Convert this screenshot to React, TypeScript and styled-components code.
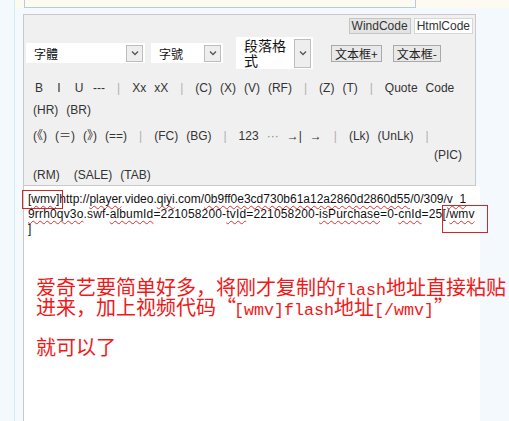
import { createGlobalStyle, styled } from 'styled-components'

const GlobalStyle = createGlobalStyle`
  html, body {
    margin: 0;
    padding: 0;
    background: #f4f9fd;
  }
  body {
    font-family: Arial, "Liberation Sans", "Noto Sans CJK SC", sans-serif;
  }
`

const Page = styled.div`
  display: flex;
  width: 509px;
  height: 421px;
  overflow: hidden;
`

const Gutter = styled.div`
  flex: none;
  width: 14px;
  background: #f4f9fd;
  border-right: 1px solid #d3ebf4;
`

const Content = styled.div`
  flex: 1;
  display: flex;
  flex-direction: column;
  min-width: 0;
`

const TopStrip = styled.div`
  flex: none;
  height: 8px;
  padding-left: 9px;
  background: #fdfbf1;
`

const TopBox = styled.div`
  width: 390px;
  height: 7px;
  border: 1px solid #b8cbd6;
  border-top: none;
`

const Editor = styled.div`
  flex: 1;
  display: flex;
  flex-direction: column;
  margin: 6px 0 0 8px;
`

const Toolbar = styled.div`
  width: 451px;
  height: 170px;
  background: #f0f0f0;
  border: 1px solid #c9c9c9;
  display: flex;
  flex-direction: column;
`

const TabBar = styled.div`
  height: 19px;
  box-sizing: border-box;
  padding: 3px 2px 0 0;
  display: flex;
  justify-content: flex-end;
  gap: 3px;
`

const Tab = styled.div<{ $active?: boolean }>`
  height: 16px;
  box-sizing: border-box;
  padding: 0 2px;
  border: 1px solid ${p => (p.$active ? '#d6d6d6' : '#c4c4c4')};
  background: ${p => (p.$active ? '#ffffff' : '#e4e4e4')};
  font-size: 12px;
  line-height: 14px;
  color: #333;
`

const ControlRow = styled.div`
  height: 32px;
  margin-top: 3px;
  padding-left: 2px;
  display: flex;
  align-items: center;
`

const Select = styled.div<{ $w: number; $h: number; $ml: number }>`
  width: ${p => p.$w}px;
  height: ${p => p.$h}px;
  margin-left: ${p => p.$ml}px;
  box-sizing: border-box;
  padding: 0 2px 0 8px;
  background: #fff;
  display: flex;
  align-items: center;
  justify-content: space-between;
`

const SelectLabel = styled.span<{ $size: number; $wrap?: number }>`
  font-family: "Noto Sans CJK SC", sans-serif;
  font-size: ${p => p.$size}px;
  line-height: 15px;
  color: #111;
  width: ${p => (p.$wrap ? `${p.$wrap}px` : 'auto')};
`

const Arrow = styled.span<{ $h: number }>`
  flex: none;
  width: 17px;
  height: ${p => p.$h}px;
  box-sizing: border-box;
  border: 1px solid #bdbdbd;
  background: #eeeeee;
  display: flex;
  align-items: center;
  justify-content: center;
`

const TextButton = styled.span<{ $ml: number }>`
  margin-left: ${p => p.$ml}px;
  height: 17px;
  box-sizing: border-box;
  padding: 0 3px;
  border: 1px solid #a9a9a9;
  background: #e9e9e9;
  font-family: "Noto Sans CJK SC", sans-serif;
  font-size: 12px;
  line-height: 15px;
  color: #222;
`

const Row = styled.div<{ $h: number; $mt?: number; $right?: boolean }>`
  height: ${p => p.$h}px;
  margin-top: ${p => p.$mt ?? 0}px;
  padding: 0 9px 0 5px;
  display: flex;
  align-items: center;
  justify-content: ${p => (p.$right ? 'flex-end' : 'flex-start')};
  white-space: nowrap;
`

const Btn = styled.span<{ $ml?: number; $muted?: boolean }>`
  margin: 0 4px 0 ${p => p.$ml ?? 4}px;
  min-width: 12px;
  text-align: center;
  font-size: 12px;
  line-height: 14px;
  color: ${p => (p.$muted ? '#888' : '#333')};
`

const Sep = styled.span`
  margin: 0 8px;
  font-size: 12px;
  line-height: 14px;
  color: #b0b0b0;
`

const TextArea = styled.div`
  position: relative;
  flex: 1;
  width: 457px;
  background: #fff;
  border-left: 1px solid #c9c9c9;
  padding: 6px 0 0 4px;
  box-sizing: border-box;
`

const Code = styled.div`
  font-size: 12px;
  line-height: 15px;
  color: #111;
  white-space: nowrap;
`

const CodeLine = styled.div<{ $spacing?: number }>`
  letter-spacing: ${p => p.$spacing ?? 0}px;
`

const Typo = styled.span`
  text-decoration: underline wavy #e03030;
  text-decoration-thickness: 1px;
  text-underline-offset: 2px;
`

const Mark = styled.div<{ $x: number; $y: number; $w: number; $h: number }>`
  position: absolute;
  left: ${p => p.$x}px;
  top: ${p => p.$y}px;
  width: ${p => p.$w}px;
  height: ${p => p.$h}px;
  box-sizing: border-box;
  border: 1px solid #d02828;
`

const Note = styled.div`
  margin: 40px 0 0 8px;
  font-family: "Noto Sans CJK SC", sans-serif;
  font-size: 20px;
  color: #f01818;
  white-space: nowrap;
`

const NoteLine = styled.div`
  height: 20px;
  line-height: 20px;
`

const Mono = styled.span`
  font-family: "Liberation Mono", monospace;
  font-size: 16.67px;
  line-height: 0;
`

const Quote = styled.span<{ $align: 'left' | 'right' }>`
  display: inline-block;
  width: 18px;
  line-height: 20px;
  vertical-align: top;
  text-align: ${p => p.$align};
`

const Chevron = () => (
  <svg width="8" height="6" viewBox="0 0 8 6">
    <path d="M1 1.5 L4 4.5 L7 1.5" fill="none" stroke="#555" strokeWidth="1.3" />
  </svg>
)

function App() {
  return (
    <Page>
      <GlobalStyle />
      <Gutter />
      <Content>
        <TopStrip>
          <TopBox />
        </TopStrip>
        <Editor>
          <Toolbar>
            <TabBar>
              <Tab>WindCode</Tab>
              <Tab $active>HtmlCode</Tab>
            </TabBar>
            <ControlRow>
              <Select $w={119} $h={20} $ml={0}>
                <SelectLabel $size={12}>字體</SelectLabel>
                <Arrow $h={17}><Chevron /></Arrow>
              </Select>
              <Select $w={72} $h={20} $ml={6}>
                <SelectLabel $size={12}>字號</SelectLabel>
                <Arrow $h={17}><Chevron /></Arrow>
              </Select>
              <Select $w={77} $h={32} $ml={13}>
                <SelectLabel $size={14} $wrap={46}>段落格式</SelectLabel>
                <Arrow $h={29}><Chevron /></Arrow>
              </Select>
              <TextButton $ml={18}>文本框+</TextButton>
              <TextButton $ml={11}>文本框-</TextButton>
            </ControlRow>
            <Row $h={22} $mt={8}>
              <Btn>B</Btn>
              <Btn>I</Btn>
              <Btn>U</Btn>
              <Btn>---</Btn>
              <Sep>|</Sep>
              <Btn>Xx</Btn>
              <Btn>xX</Btn>
              <Sep>|</Sep>
              <Btn>(C)</Btn>
              <Btn>(X)</Btn>
              <Btn>(V)</Btn>
              <Btn>(RF)</Btn>
              <Sep>|</Sep>
              <Btn>(Z)</Btn>
              <Btn>(T)</Btn>
              <Sep>|</Sep>
              <Btn>Quote</Btn>
              <Btn>Code</Btn>
            </Row>
            <Row $h={22}>
              <Btn>(HR)</Btn>
              <Btn>(BR)</Btn>
            </Row>
            <Row $h={20} $mt={5}>
              <Btn>(《)</Btn>
              <Btn>(＝)</Btn>
              <Btn>(》)</Btn>
              <Btn>(==)</Btn>
              <Sep>|</Sep>
              <Btn>(FC)</Btn>
              <Btn>(BG)</Btn>
              <Sep>|</Sep>
              <Btn>123</Btn>
              <Btn $muted>···</Btn>
              <Btn>→|</Btn>
              <Btn>→</Btn>
              <Sep>|</Sep>
              <Btn>(Lk)</Btn>
              <Btn>(UnLk)</Btn>
              <Sep>|</Sep>
            </Row>
            <Row $h={18} $right>
              <Btn>(PIC)</Btn>
            </Row>
            <Row $h={18} $mt={2}>
              <Btn>(RM)</Btn>
              <Btn $ml={10}>(SALE)</Btn>
              <Btn>(TAB)</Btn>
            </Row>
          </Toolbar>
          <TextArea>
            <Code>
              <CodeLine>
                [<Typo>wmv</Typo>]http://<Typo>player</Typo>.video.<Typo>qiyi</Typo>.com/<Typo>0b9ff0e3cd730b61a12a2860d2860d55</Typo>/0/309/<Typo>v_1</Typo>
              </CodeLine>
              <CodeLine $spacing={0.16}>
                <Typo>9rrh0qv3o</Typo>.swf-<Typo>albumId</Typo>=221058200-<Typo>tvId</Typo>=221058200-<Typo>isPurchase</Typo>=0-<Typo>cnId</Typo>=25[/<Typo>wmv</Typo>
              </CodeLine>
              <CodeLine>]</CodeLine>
            </Code>
            <Mark $x={-2} $y={4} $w={41} $h={19} />
            <Mark $x={418} $y={19} $w={46} $h={28} />
            <Note>
              <NoteLine>
                爱奇艺要简单好多，将刚才复制的<Mono>flash</Mono>地址直接粘贴
              </NoteLine>
              <NoteLine>
                进来，加上视频代码<Quote $align="right">“</Quote><Mono>[wmv]flash</Mono>地址<Mono>[/wmv]</Mono><Quote $align="left">”</Quote>
              </NoteLine>
              <NoteLine />
              <NoteLine>就可以了</NoteLine>
            </Note>
          </TextArea>
        </Editor>
      </Content>
    </Page>
  )
}

export default App
